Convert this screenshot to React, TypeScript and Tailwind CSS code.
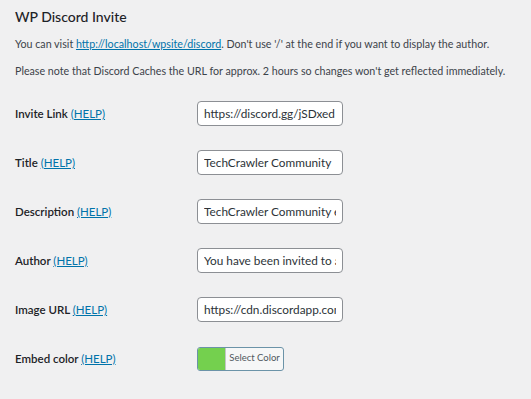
import React from 'react';

const rows = [
  { label: 'Invite Link', value: 'https://discord.gg/jSDxed' },
  { label: 'Title', value: 'TechCrawler Community' },
  { label: 'Description', value: 'TechCrawler Community exists' },
  { label: 'Author', value: 'You have been invited to a server' },
  { label: 'Image URL', value: 'https://cdn.discordapp.com/icons' },
];

const HelpLink = () => (
  <a href="#" className="font-normal text-[#0073aa] underline">
    (HELP)
  </a>
);

const App = () => {
  return (
    <div
      className="h-[399px] w-[531px] overflow-hidden bg-[#f0f0f1] pl-[15px] pt-[7px] text-[#3c434a]"
      style={{ fontFamily: 'Lato, "Open Sans", Arial, sans-serif' }}
    >
      <h2 className="h-[20px] text-[14px] font-medium leading-[20px] text-[#1d2327]">WP Discord Invite</h2>
      <p className="mt-[7px] whitespace-nowrap text-[10.7px] leading-[20px]">
        You can visit{' '}
        <a href="#" className="text-[#0073aa] underline">
          http://localhost/wpsite/discord
        </a>
        . Don't use '/' at the end if you want to display the author.
      </p>
      <p className="mt-[7px] whitespace-nowrap text-[10.7px] leading-[20px]">
        Please note that Discord Caches the URL for approx. 2 hours so changes won't get reflected immediately.
      </p>

      <div className="mt-[8px] flex flex-col">
        {rows.map((row) => (
          <div key={row.label} className="flex h-[49px] items-center">
            <div className="w-[182px] text-[11.5px] font-semibold text-[#1d2327]">
              {row.label} <HelpLink />
            </div>
            <input
              readOnly
              value={row.value}
              className="h-[25px] w-[146px] rounded-[4px] border border-[#8c8f94] bg-white px-[6px] text-[11.8px] text-[#2c3338] outline-none"
            />
          </div>
        ))}
        <div className="flex h-[49px] items-center">
          <div className="w-[182px] text-[11.5px] font-semibold text-[#1d2327]">
            Embed color <HelpLink />
          </div>
          <button className="flex h-[24px] w-[87px] overflow-hidden rounded-[3px] border border-[#6b93a8] bg-[#f6f7f7]">
            <span className="h-full w-[27px] bg-[#74d04e]" />
            <span className="flex h-full flex-1 items-center justify-center whitespace-nowrap border-l border-[#c3c4c7] text-[9.5px] text-[#50575e]">
              Select Color
            </span>
          </button>
        </div>
      </div>
    </div>
  );
};

export default App;
